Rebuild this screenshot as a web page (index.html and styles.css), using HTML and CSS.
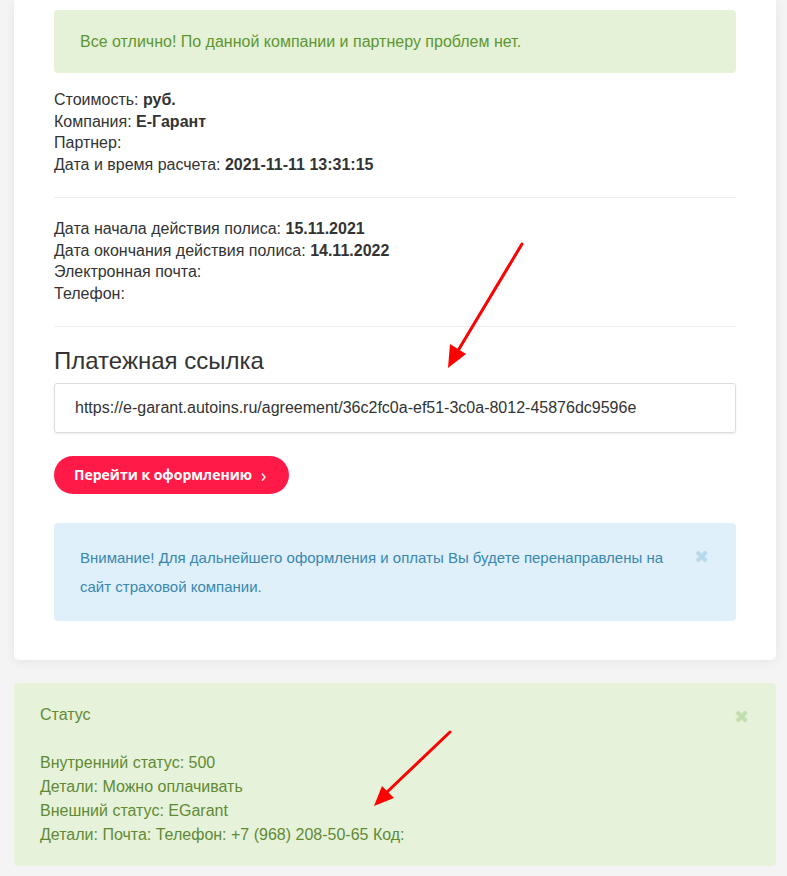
FILE: index.html
```html
<!DOCTYPE html>
<html lang="ru">
<head>
<meta charset="utf-8">
<link rel="stylesheet" href="styles.css">
</head>
<body>
<div class="page">
  <div class="card">
    <div class="alert alert-success">Все отлично! По данной компании и партнеру проблем нет.</div>
    <div class="info">
      <div>Стоимость: <b>руб.</b></div>
      <div>Компания: <b>Е-Гарант</b></div>
      <div>Партнер:</div>
      <div>Дата и время расчета: <b>2021-11-11 13:31:15</b></div>
    </div>
    <hr class="sep">
    <div class="info">
      <div>Дата начала действия полиса: <b>15.11.2021</b></div>
      <div>Дата окончания действия полиса: <b>14.11.2022</b></div>
      <div>Электронная почта:</div>
      <div>Телефон:</div>
    </div>
    <hr class="sep">
    <h2 class="title">Платежная ссылка</h2>
    <div class="link-box">https://e-garant.autoins.ru/agreement/36c2fc0a-ef51-3c0a-8012-45876dc9596e</div>
    <a class="btn">Перейти к оформлению <span class="chev">›</span></a>
    <div class="alert alert-info">
      <span class="info-text">Внимание! Для дальнейшего оформления и оплаты Вы будете перенаправлены на сайт страховой компании.</span>
      <span class="close close-info">✖</span>
    </div>
  </div>
  <div class="status">
    <div class="status-head">
      <span>Статус</span>
      <span class="close close-green">✖</span>
    </div>
    <div class="status-lines">
      <div>Внутренний статус: 500</div>
      <div>Детали: Можно оплачивать</div>
      <div>Внешний статус: EGarant</div>
      <div>Детали: Почта: Телефон: +7 (968) 208-50-65 Код:</div>
    </div>
  </div>
  <svg class="arrow arrow-1" width="90" height="135" viewBox="0 0 90 135">
    <line x1="84" y1="6" x2="18" y2="116" stroke="#ff0000" stroke-width="3" stroke-linecap="round"/>
    <polygon points="10,130 12,106 28,116" fill="#ff0000"/>
  </svg>
  <svg class="arrow arrow-2" width="90" height="85" viewBox="0 0 90 85">
    <line x1="84" y1="5" x2="20" y2="66" stroke="#ff0000" stroke-width="3" stroke-linecap="round"/>
    <polygon points="8,79 16,59 28,71" fill="#ff0000"/>
  </svg>
</div>
</body>
</html>
```
FILE: styles.css
```css
html, body {
  margin: 0;
  padding: 0;
  background: #f4f4f4;
}
body {
  font-family: "Liberation Sans", Arial, sans-serif;
  font-size: 16px;
  color: #333;
}
.page {
  position: relative;
  width: 787px;
  height: 876px;
  overflow: hidden;
}
.card {
  margin: 0 11px 0 14px;
  background: #fff;
  padding: 10px 40px 39px 40px;
  border-radius: 0 0 5px 5px;
  box-shadow: 0 2px 12px rgba(0,0,0,0.06);
}
.alert {
  border-radius: 4px;
}
.alert-success {
  background: #e5f2d8;
  color: #5e9630;
  height: 63px;
  box-sizing: border-box;
  padding: 0 26px;
  display: flex;
  align-items: center;
}
.info {
  margin-top: 16px;
  line-height: 21.7px;
}
.info b {
  font-weight: bold;
  color: #333;
}
.sep {
  border: 0;
  border-top: 1px solid #eee;
  margin: 21px 0 20px;
}
.sep + .info { margin-top: 0; }
.title {
  font-weight: normal;
  font-size: 24px;
  margin: 18px 0 8px;
  color: #333;
  line-height: 28px;
}
.link-box {
  border: 1px solid #ddd;
  border-radius: 3px;
  height: 50px;
  box-sizing: border-box;
  padding: 0 20px;
  display: flex;
  align-items: center;
  box-shadow: 0 1px 2px rgba(0,0,0,0.08);
}
.btn {
  display: inline-flex;
  align-items: center;
  margin-top: 23px;
  height: 38px;
  padding: 0 23px 0 20px;
  border-radius: 19px;
  background: #ff1a47;
  color: #fff;
  font-family: "Open Sans", sans-serif;
  font-weight: bold;
  font-size: 14px;
}
.chev {
  margin-left: 9px;
  font-weight: normal;
  font-size: 18px;
}
.alert-info {
  margin-top: 29px;
  background: #dff0fb;
  color: #3a87ad;
  font-size: 15px;
  padding: 20px 27px 20px 26px;
  line-height: 29px;
  position: relative;
  display: flex;
  justify-content: space-between;
  align-items: flex-start;
}
.info-text { max-width: 600px; }
.close {
  font-size: 18px;
  line-height: 29px;
}
.close-info { color: #b7d9ec; }
.close-green { color: #c2deaf; }
.status {
  margin: 23px 11px 0 14px;
  background: #e6f2d9;
  border-radius: 4px;
  color: #628a34;
  padding: 20px 27px 20px 26px;
  height: 183px;
  box-sizing: border-box;
}
.status-head {
  display: flex;
  justify-content: space-between;
  line-height: 24px;
}
.status-lines {
  margin-top: 19px;
  line-height: 24px;
}
.arrow {
  position: absolute;
}
.arrow-1 { left: 438px; top: 238px; }
.arrow-2 { left: 366px; top: 727px; }
```
